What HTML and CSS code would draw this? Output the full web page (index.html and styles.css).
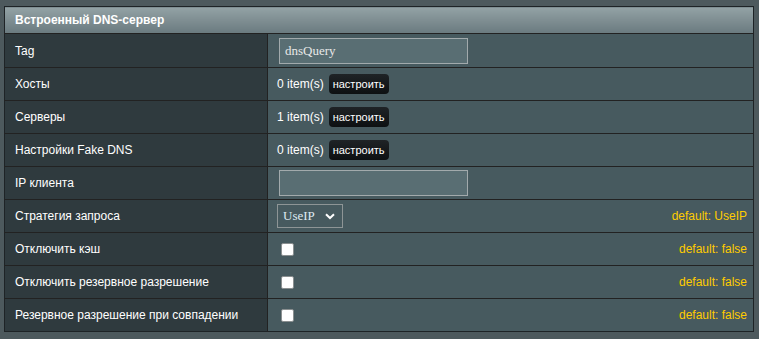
FILE: index.html
```html
<!DOCTYPE html>
<html lang="ru">
<head>
    <meta charset="UTF-8">
    <title>Встроенный DNS-сервер</title>
    <link rel="stylesheet" href="styles.css">
</head>
<body>

    <!-- DNS settings table -->
    <table class="form-table">
        <thead>
            <tr>
                <th colspan="3">Встроенный DNS-сервер</th>
            </tr>
        </thead>
        <tbody>
            <tr>
                <td class="label">Tag</td>
                <td class="value"><input type="text" class="text-input" value="dnsQuery"></td>
                <td class="hint"></td>
            </tr>
            <tr>
                <td class="label">Хосты</td>
                <td class="value"><span class="count">0 item(s)</span><button class="btn-small">настроить</button></td>
                <td class="hint"></td>
            </tr>
            <tr>
                <td class="label">Серверы</td>
                <td class="value"><span class="count">1 item(s)</span><button class="btn-small">настроить</button></td>
                <td class="hint"></td>
            </tr>
            <tr>
                <td class="label">Настройки Fake DNS</td>
                <td class="value"><span class="count">0 item(s)</span><button class="btn-small">настроить</button></td>
                <td class="hint"></td>
            </tr>
            <tr>
                <td class="label">IP клиента</td>
                <td class="value"><input type="text" class="text-input" value=""></td>
                <td class="hint"></td>
            </tr>
            <tr>
                <td class="label">Стратегия запроса</td>
                <td class="value">
                    <div class="select">
                        <span>UseIP</span>
                        <svg width="10" height="7" viewBox="0 0 10 7"><path d="M1 1.2 L5 5 L9 1.2" fill="none" stroke="#fff" stroke-width="2"/></svg>
                    </div>
                </td>
                <td class="hint">default: UseIP</td>
            </tr>
            <tr>
                <td class="label">Отключить кэш</td>
                <td class="value"><span class="check"></span></td>
                <td class="hint">default: false</td>
            </tr>
            <tr>
                <td class="label">Отключить резервное разрешение</td>
                <td class="value"><span class="check"></span></td>
                <td class="hint">default: false</td>
            </tr>
            <tr>
                <td class="label">Резервное разрешение при совпадении</td>
                <td class="value"><span class="check"></span></td>
                <td class="hint">default: false</td>
            </tr>
        </tbody>
    </table>

</body>
</html>
```

FILE: styles.css
```css
body {
    margin: 0;
    padding: 6px 5px 0 4px;
    background: #4d595d;
    font-family: "Liberation Sans", Arial, sans-serif;
    color: #fff;
}

/* Main table */
.form-table {
    width: 750px;
    border-collapse: collapse;
    border: 1px solid #1e2326;
}

.form-table th {
    height: 26px;
    padding: 0 0 0 10px;
    text-align: left;
    font-size: 12px;
    font-weight: bold;
    color: #fff;
    background: linear-gradient(#93a2a5, #6a7a7f);
    border-bottom: 1px solid #222;
}

.form-table td {
    height: 32px;
    padding: 0;
    font-size: 12px;
    border-top: 1px solid #222;
}

.form-table tbody tr:first-child td {
    border-top: none;
    height: 33px;
}

.label {
    width: 252px;
    padding-left: 10px !important;
    background: #2f3a3e;
    border-right: 1px solid #222;
}

.value {
    background: #475a5f;
    padding-left: 9px !important;
    width: 330px;
}

.hint {
    background: #475a5f;
    text-align: right;
    padding-right: 6px !important;
    color: #ffcc00;
}

/* Inputs */
.text-input {
    display: block;
    margin-left: 2px;
    width: 189px;
    height: 26px;
    box-sizing: border-box;
    padding: 0 5px;
    background: #596e73;
    border: 1px solid #a2aaac;
    color: #e8e8e8;
    font-family: "Liberation Serif", "Times New Roman", serif;
    font-size: 13px;
    outline: none;
}

.count {
    color: #fff;
    vertical-align: middle;
}

.btn-small {
    margin-left: 5px;
    height: 20px;
    padding: 0 4px;
    border: none;
    border-radius: 4px;
    background: linear-gradient(#1f2326, #0d1012);
    color: #fff;
    font-family: "Liberation Sans", Arial, sans-serif;
    font-size: 11px;
    vertical-align: middle;
}

.select {
    display: flex;
    align-items: center;
    justify-content: space-between;
    width: 66px;
    height: 24px;
    box-sizing: border-box;
    padding: 0 7px 0 5px;
    border: 1px solid #8e9596;
    background: #475a5f;
    color: #dfeaf2;
    font-family: "Liberation Serif", "Times New Roman", serif;
    font-size: 13px;
}

.check {
    display: block;
    margin-left: 4px;
    width: 13px;
    height: 13px;
    box-sizing: border-box;
    background: #fff;
    border: 1px solid #8a8f90;
    border-radius: 2px;
}
```
